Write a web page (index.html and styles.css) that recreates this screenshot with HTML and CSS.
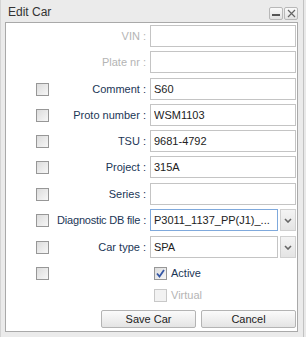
FILE: index.html
```html
<!DOCTYPE html>
<html lang="en">
<head>
    <meta charset="UTF-8">
    <title>Edit Car</title>
    <link rel="stylesheet" href="styles.css">
</head>
<body>
    <div class="window">
        <div class="titlebar">
            <span class="title">Edit Car</span>
            <div class="tools">
                <span class="tool">
                    <svg width="8" height="8" viewBox="0 0 8 8"><rect x="0" y="5" width="8" height="2" fill="#555"/></svg>
                </span>
                <span class="tool">
                    <svg width="9" height="9" viewBox="0 0 9 9"><path d="M1 1 L8 8 M8 1 L1 8" stroke="#666" stroke-width="1.2" fill="none"/></svg>
                </span>
            </div>
        </div>
        <div class="panel">
            <div class="row disabled">
                <span></span>
                <label>VIN :</label>
                <input class="field" type="text" value="">
            </div>
            <div class="row disabled wide">
                <span></span>
                <label>Plate nr :</label>
                <input class="field" type="text" value="">
            </div>
            <div class="row">
                <span class="cb"></span>
                <label>Comment :</label>
                <input class="field" type="text" value="S60">
            </div>
            <div class="row">
                <span class="cb"></span>
                <label>Proto number :</label>
                <input class="field" type="text" value="WSM1103">
            </div>
            <div class="row">
                <span class="cb"></span>
                <label>TSU :</label>
                <input class="field" type="text" value="9681-4792">
            </div>
            <div class="row wide">
                <span class="cb"></span>
                <label>Project :</label>
                <input class="field" type="text" value="315A">
            </div>
            <div class="row">
                <span class="cb"></span>
                <label>Series :</label>
                <input class="field" type="text" value="">
            </div>
            <div class="row wide">
                <span class="cb"></span>
                <label class="tight">Diagnostic DB file :</label>
                <div class="combo">
                    <span class="field combo-text focus">P3011_1137_PP(J1)_...</span>
                    <span class="trigger">
                        <svg width="8" height="5" viewBox="0 0 8 5"><path d="M1 1 L4 4 L7 1" stroke="#666" stroke-width="1.6" fill="none"/></svg>
                    </span>
                </div>
            </div>
            <div class="row">
                <span class="cb"></span>
                <label>Car type :</label>
                <div class="combo">
                    <span class="field combo-text">SPA</span>
                    <span class="trigger">
                        <svg width="8" height="5" viewBox="0 0 8 5"><path d="M1 1 L4 4 L7 1" stroke="#666" stroke-width="1.6" fill="none"/></svg>
                    </span>
                </div>
            </div>
            <div class="row check-row">
                <span class="cb"></span>
                <span></span>
                <div class="check">
                    <span class="cb checked">
                        <svg width="11" height="11" viewBox="0 0 11 11"><path d="M2 5.5 L4.5 8.5 L9 2" stroke="#3557a6" stroke-width="1.8" fill="none"/></svg>
                    </span>
                    <span>Active</span>
                </div>
            </div>
            <div class="row check-row">
                <span></span>
                <span></span>
                <div class="check off">
                    <span class="cb"></span>
                    <span>Virtual</span>
                </div>
            </div>
            <div class="buttons">
                <button class="btn">Save Car</button>
                <button class="btn">Cancel</button>
            </div>
        </div>
    </div>
</body>
</html>
```

FILE: styles.css
```css
body {
    margin: 0;
    background: #e9e9e9;
    font-family: 'Liberation Sans', Arial, sans-serif;
    font-size: 11px;
}
.window {
    width: 304px;
    height: 337px;
    box-sizing: border-box;
    border-left: 1px solid #d4d4d4;
    border-right: 1px solid #c2c2c2;
    background: #ebebeb;
}
.titlebar {
    height: 22px;
    display: flex;
    align-items: center;
    justify-content: space-between;
    padding: 0 5px 0 7px;
}
.title {
    font-size: 12px;
    color: #333;
    margin-top: 1px;
}
.tools {
    display: flex;
    gap: 1px;
    margin-top: 4px;
}
.tool {
    width: 14px;
    height: 13px;
    box-sizing: border-box;
    border: 1px solid #b8b8b8;
    border-radius: 2px;
    background: linear-gradient(#fafafa, #e2e2e2);
    display: flex;
    align-items: center;
    justify-content: center;
}
.panel {
    margin-left: 4px;
    width: 293px;
    height: 310px;
    box-sizing: border-box;
    background: #fff;
    border: 1px solid #a9a9a9;
    padding: 2px 1px 0 30px;
}
.row {
    display: grid;
    grid-template-columns: 13px 1fr 146px;
    column-gap: 4px;
    align-items: center;
    height: 22px;
    margin-bottom: 4px;
}
.row.wide {
    margin-bottom: 5px;
}
.row label {
    text-align: right;
    color: #1b3656;
    white-space: nowrap;
}
.row label.tight {
    letter-spacing: -0.2px;
}
.row.disabled label {
    color: #b4b4b4;
}
.field {
    height: 22px;
    box-sizing: border-box;
    border: 1px solid #c4c4c4;
    padding: 0 3px;
    font-family: inherit;
    font-size: 11px;
    color: #222;
    background: #fff;
    width: 100%;
}
.cb {
    width: 13px;
    height: 13px;
    box-sizing: border-box;
    border: 1px solid #979797;
    background: linear-gradient(135deg, #dcdcdc, #f7f7f7);
    display: flex;
    align-items: center;
    justify-content: center;
}
.combo {
    display: flex;
    gap: 2px;
}
.combo-text {
    display: flex;
    align-items: center;
    flex: 1;
    width: auto;
    white-space: nowrap;
    overflow: hidden;
}
.combo-text.focus {
    border-color: #7fa9dc;
}
.trigger {
    width: 16px;
    height: 22px;
    box-sizing: border-box;
    border: 1px solid #d0d0d0;
    background: linear-gradient(#f4f4f4, #e4e4e4);
    display: flex;
    align-items: center;
    justify-content: center;
}
.check-row {
    margin-bottom: 0;
}
.check {
    display: flex;
    align-items: center;
    gap: 4px;
    padding-left: 4px;
    color: #1b3656;
}
.check.off {
    color: #b4b4b4;
}
.check.off .cb {
    border-color: #c8c8c8;
    background: #f2f2f2;
}
.buttons {
    display: flex;
    justify-content: flex-end;
    gap: 5px;
    margin-top: 4px;
}
.btn {
    width: 95px;
    height: 18px;
    border: 1px solid #b4b4b4;
    border-radius: 2px;
    background: linear-gradient(#fbfbfb, #e4e4e4);
    font-family: inherit;
    font-size: 11px;
    color: #222;
    padding: 0;
}
```
